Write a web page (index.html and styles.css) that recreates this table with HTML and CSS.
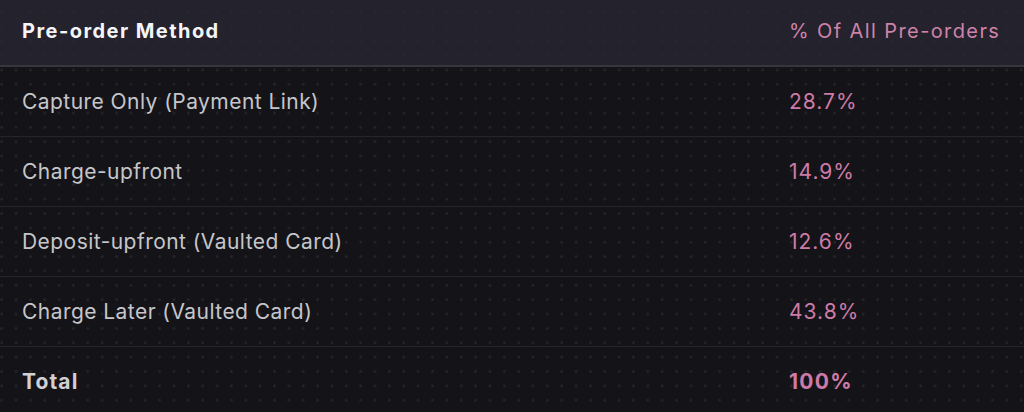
FILE: index.html
```html
<!DOCTYPE html>
<html>
<head>
<meta charset="utf-8">
<link rel="stylesheet" href="styles.css">
</head>
<body>
<div class="table">
  <div class="row head">
    <div class="cell">Pre-order Method</div>
    <div class="cell pct">% Of All Pre-orders</div>
  </div>
  <div class="row">
    <div class="cell">Capture Only (Payment Link)</div>
    <div class="cell pct">28.7%</div>
  </div>
  <div class="row">
    <div class="cell">Charge-upfront</div>
    <div class="cell pct">14.9%</div>
  </div>
  <div class="row">
    <div class="cell">Deposit-upfront (Vaulted Card)</div>
    <div class="cell pct">12.6%</div>
  </div>
  <div class="row">
    <div class="cell">Charge Later (Vaulted Card)</div>
    <div class="cell pct">43.8%</div>
  </div>
  <div class="row total">
    <div class="cell">Total</div>
    <div class="cell pct">100%</div>
  </div>
</div>
</body>
</html>
```

FILE: styles.css
```css
html, body {
  margin: 0;
  padding: 0;
  background: #141318;
  height: 100%;
  overflow: hidden;
}
.table {
  width: 1024px;
  height: 412px;
  font-family: Inter, "Noto Sans", sans-serif;
  background-color: #141318;
  background-image: radial-gradient(circle, rgba(255,255,255,0.07) 1.1px, transparent 1.6px);
  background-size: 14.37px 14.37px;
  background-position: -5.5px 5.3px;
}
.row {
  display: grid;
  grid-template-columns: 767px 1fr;
  align-items: center;
  height: 69px;
  border-bottom: 1px solid #26252b;
  font-size: 21px;
  color: #c6c6ca;
  letter-spacing: 0.45px;
}
.cell {
  padding-left: 22px;
}
.pct {
  color: #cd7ba6;
  letter-spacing: 1px;
}
.head {
  box-sizing: border-box;
  height: 67px;
  padding-bottom: 4px;
  background-color: rgba(40, 40, 52, 0.75);
  border-bottom: 2px solid #36363c;
  color: #f5f5f7;
  font-weight: 700;
  font-size: 20px;
  letter-spacing: 1.45px;
}
.head .pct {
  font-weight: 400;
  font-size: 20px;
  letter-spacing: 1.4px;
  color: #cf82aa;
}
.total {
  font-weight: 700;
  color: #d0d0d4;
  border-bottom: none;
  letter-spacing: 1.1px;
}
.total .pct {
  letter-spacing: 1.3px;
}
```
